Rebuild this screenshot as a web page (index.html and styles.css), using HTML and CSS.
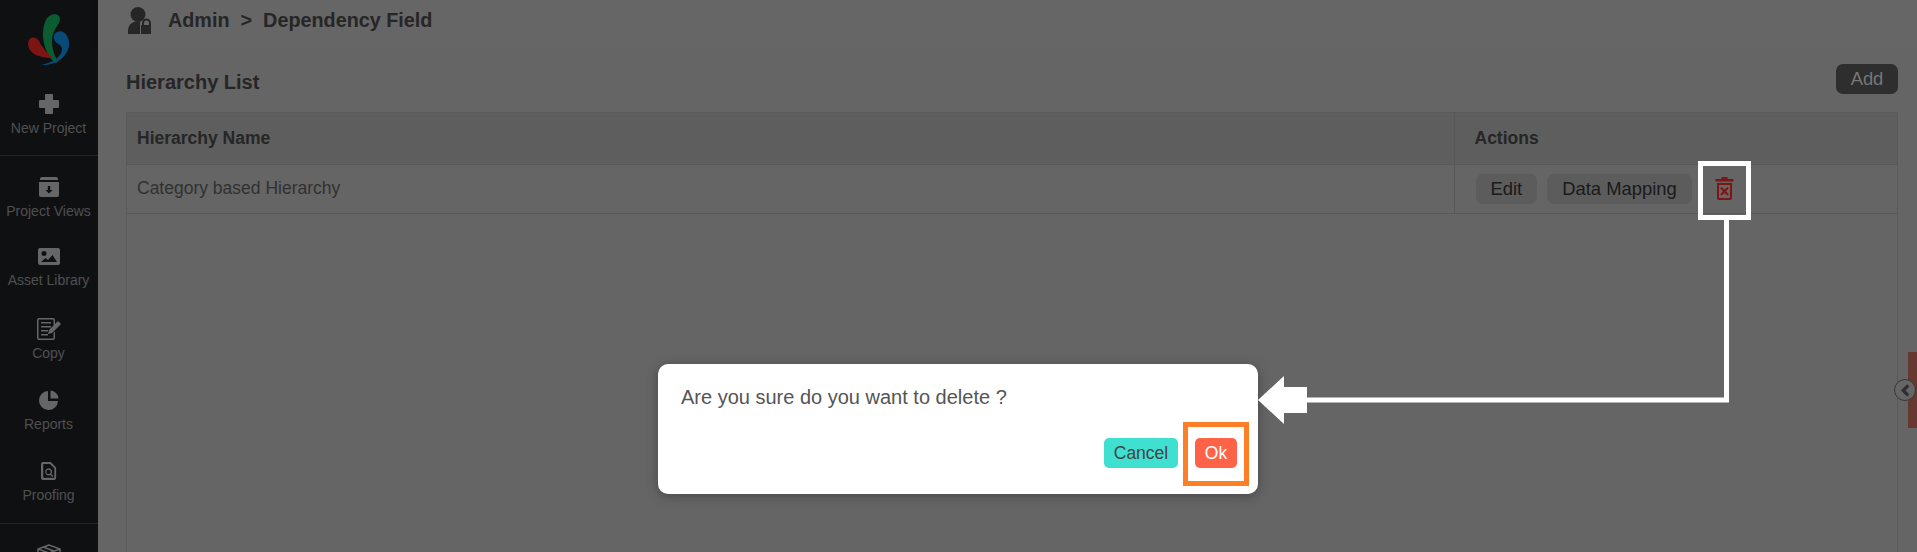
FILE: index.html
```html
<!DOCTYPE html>
<html lang="en">
  <head>
    <meta charset="UTF-8" />
    <title>Dependency Field</title>
    <link rel="stylesheet" href="styles.css">
  </head>
  <body>
    <div class="page">
      <aside class="sidebar">
        <div class="logo">
          <svg width="42" height="58" viewBox="0 0 42 58">
            <path d="M27 55 C15 44 12 24 18 12 C22 4 32 5 32 11 C32 17 24 21 24 33 C24 42 27 48 30 54 Z" fill="#0b5c30"/>
            <path d="M29 24 C36 21 42 29 41 38 C39 50 26 58 13 57 C24 55 34 49 34 41 C34 36 27 36 26 31 C25 28 27 25 29 24 Z" fill="#0a4a78"/>
            <path d="M0 35 C1 28 8 28 11 33 C15 41 21 47 25 50 C16 50 0 48 0 35 Z" fill="#7e1515"/>
          </svg>
        </div>
        <a class="nav-item nav-new">
          <span class="nav-icon"><svg width="22" height="22" viewBox="0 0 22 22"><path d="M8 1h6a1 1 0 0 1 1 1v5h5a1 1 0 0 1 1 1v6a1 1 0 0 1-1 1h-5v5a1 1 0 0 1-1 1H8a1 1 0 0 1-1-1v-5H2a1 1 0 0 1-1-1V8a1 1 0 0 1 1-1h5V2a1 1 0 0 1 1-1z"/></svg></span>
          <span>New Project</span>
        </a>
        <div class="nav-group">
          <a class="nav-item">
            <span class="nav-icon"><svg width="20" height="20" viewBox="0 0 20 20"><path d="M3 0h14a2 2 0 0 1 2 2v1H1V2a2 2 0 0 1 2-2zM0 5h20v13a2 2 0 0 1-2 2H2a2 2 0 0 1-2-2zm8.800 4v4H6.500l3.500 3.500 3.500-3.500h-2.300V9z" fill-rule="evenodd"/></svg></span>
            <span>Project Views</span>
          </a>
          <a class="nav-item">
            <span class="nav-icon"><svg width="22" height="17" viewBox="0 0 22 17"><path d="M2 0h18a2 2 0 0 1 2 2v13a2 2 0 0 1-2 2H2a2 2 0 0 1-2-2V2a2 2 0 0 1 2-2zm4 3a2.500 2.500 0 1 0 0 5 2.500 2.500 0 0 0 0-5zM3 14h16l-4.500-7-4.500 5-2.500-2z" fill-rule="evenodd"/></svg></span>
            <span>Asset Library</span>
          </a>
          <a class="nav-item">
            <span class="nav-icon"><svg width="26" height="24" viewBox="0 0 26 24"><path d="M3 1h14a2 2 0 0 1 2 2v4l-1.500 1.500V3a.5.5 0 0 0-.5-.5H3a.5.5 0 0 0-.5.500v18a.5.5 0 0 0 .5.500h14a.5.5 0 0 0 .5-.5v-5l1.500-1.500V21a2 2 0 0 1-2 2H3a2 2 0 0 1-2-2V3a2 2 0 0 1 2-2zm2 4h10v1.500H5zm0 4h10v1.500H5zm0 4h7v1.500H5zm0 4h7v1.500H5zM22 4l3 3-9 9-4 1 1-4z"/></svg></span>
            <span>Copy</span>
          </a>
          <a class="nav-item">
            <span class="nav-icon"><svg width="20" height="20" viewBox="0 0 20 20"><path d="M9 1v10h10a9.500 9.500 0 1 1-10-10zM11.500 0.500A8.500 8.500 0 0 1 19.500 8.500h-8z"/></svg></span>
            <span>Reports</span>
          </a>
          <a class="nav-item">
            <span class="nav-icon"><svg width="16" height="20" viewBox="0 0 18 20"><path d="M2 0h9l6 6v12a2 2 0 0 1-2 2H2a2 2 0 0 1-2-2V2a2 2 0 0 1 2-2zm.500 2v15.500h12.500V7l-5-5zM8.500 7a4 4 0 0 1 3.200 6.400l2.300 2.300-1.100 1.100-2.300-2.300A4 4 0 1 1 8.500 7zm0 1.500a2.500 2.500 0 1 0 0 5 2.500 2.500 0 0 0 0-5z" fill-rule="evenodd"/></svg></span>
            <span>Proofing</span>
          </a>
        </div>
        <div class="nav-group">
          <a class="nav-item">
            <span class="nav-icon"><svg width="24" height="22" viewBox="0 0 24 22"><path d="M12 1L1 5v12l11 4 11-4V5zM1 5l11 4 11-4M12 9v12M6 3l11 4" fill="none" stroke="#fff" stroke-width="1.500"/></svg></span>
          </a>
        </div>
      </aside>

      <div class="main">
        <header class="topbar">
          <svg width="23" height="27" viewBox="0 0 23 27"><circle cx="10" cy="7.500" r="7.500"/><path d="M0 27v-4a9 9 0 0 1 12-8v12z"/><path d="M14 18v-2a4.500 4.500 0 0 1 9 0v2v9h-10v-9zm2 0h5v-2a2.500 2.500 0 0 0-5 0z" fill-rule="evenodd"/></svg>
          <span class="crumb">Admin</span>
          <span class="crumb">&gt;</span>
          <span class="crumb">Dependency Field</span>
        </header>
        <section class="content">
          <div class="content-head">
            <h2>Hierarchy List</h2>
            <button class="add-btn">Add</button>
          </div>
          <div class="table-box">
            <table class="list-table">
              <thead>
                <tr>
                  <th class="col-name">Hierarchy Name</th>
                  <th>Actions</th>
                </tr>
              </thead>
              <tbody>
                <tr>
                  <td class="col-name">Category based Hierarchy</td>
                  <td>
                    <div class="row-actions">
                      <button class="row-btn">Edit</button>
                      <button class="row-btn">Data Mapping</button>
                      <svg class="trash" width="19" height="23" viewBox="0 0 18 23"><path d="M6 0h6v2h6v2.500H0V2h6zM1.500 6h15v15a2 2 0 0 1-2 2h-11a2 2 0 0 1-2-2zm2 2v13h11V8zM6 10l3 2.500L12 10l1.300 1.300-2.800 3 2.800 3L12 18.600l-3-2.600-3 2.600-1.300-1.300 2.800-3-2.800-3z" fill-rule="evenodd"/></svg>
                    </div>
                  </td>
                </tr>
              </tbody>
            </table>
          </div>
        </section>
      </div>

      <div class="side-tab"></div>
      <div class="side-toggle">
        <svg width="11" height="13" viewBox="0 0 12 14"><path d="M9 1.500L3.500 7 9 12.500" fill="none" stroke="#777" stroke-width="3.500"/></svg>
      </div>

      <div class="overlay"></div>

      <div class="confirm">
        <p>Are you sure do you want to delete ?</p>
        <div class="confirm-actions">
          <button class="btn-cancel">Cancel</button>
          <button class="btn-ok">Ok</button>
        </div>
      </div>

      <!-- callouts drawn on top of the screenshot -->
      <div class="mark mark-trash"></div>
      <div class="mark mark-ok"></div>
      <svg class="callout" width="1917" height="552" viewBox="0 0 1917 552">
        <path d="M1726.500 220V400H1300" fill="none" stroke="#fff" stroke-width="5"/>
        <path d="M1258 400L1284 376V387H1307V413H1284V424Z" fill="#fff"/>
      </svg>
    </div>
  </body>
</html>
```
FILE: styles.css
```css
html, body {
  margin: 0;
  padding: 0;
}
body {
  font-family: "Liberation Sans", Arial, sans-serif;
  background: #fff;
}
.page {
  position: relative;
  display: flex;
  width: 1917px;
  height: 552px;
  overflow: hidden;
}
.sidebar {
  width: 98px;
  flex-shrink: 0;
  box-sizing: border-box;
  padding-right: 1px;
  background: #23282f;
  display: flex;
  flex-direction: column;
  align-items: stretch;
}
.sidebar > * {
  flex-shrink: 0;
}
.logo {
  position: relative;
  z-index: 2;
  height: 92px;
  padding-top: 8px;
  box-sizing: border-box;
  display: flex;
  justify-content: center;
}
.nav-item {
  display: flex;
  flex-direction: column;
  align-items: center;
  gap: 4px;
  color: #c4c4c4;
  font-size: 14px;
  height: 71px;
}
.nav-item:first-child {
  height: 69px;
}
.nav-item:nth-child(2) {
  height: 73px;
}
.nav-item:last-child {
  height: 64px;
}
.nav-icon {
  height: 24px;
  display: flex;
  align-items: center;
  justify-content: center;
}
.nav-icon svg {
  fill: #fff;
}
.sidebar > .nav-new {
  height: 63px;
}
.nav-group {
  border-top: 1px solid #5a5a5a;
  margin-right: -1px;
  padding: 19px 1px 0 0;
}
.main {
  flex: 1;
  display: flex;
  flex-direction: column;
  min-width: 0;
}
.topbar {
  height: 47px;
  flex-shrink: 0;
  box-sizing: border-box;
  padding: 0 0 7px 30px;
  background: #fff;
  box-shadow: 0 2px 5px rgba(0, 0, 0, 0.2);
  display: flex;
  align-items: center;
  gap: 11px;
  color: #606060;
}
.topbar svg {
  fill: #606060;
  margin-right: 6px;
}
.crumb {
  font-size: 19.800px;
  font-weight: bold;
}
.content {
  flex: 1;
  display: flex;
  flex-direction: column;
  padding: 17px 19px 0 28px;
  background: #fcfcfc;
}
.content-head {
  height: 48px;
  display: flex;
  justify-content: space-between;
  align-items: flex-start;
}
.content-head h2 {
  margin: 7px 0 0;
  font-size: 20px;
  color: #606060;
}
.add-btn {
  position: relative;
  z-index: 2;
  width: 62px;
  height: 30px;
  border: none;
  border-radius: 7px;
  background: #2e2e2e;
  color: #777;
  font-family: inherit;
  font-size: 18.400px;
}
.table-box {
  flex: 1;
  border: 1px solid #e0e0e0;
  border-bottom: none;
}
.list-table {
  width: 100%;
  border-collapse: collapse;
  font-size: 17.500px;
  color: #7c7c7c;
  text-align: left;
}
.list-table th {
  height: 51px;
  box-sizing: border-box;
  background: #ebebeb;
  color: #606060;
  padding: 0 20px;
  border-bottom: 1px solid #dcdcdc;
}
.list-table td {
  height: 49px;
  box-sizing: border-box;
  padding: 0 20px;
  border-bottom: 1px solid #dcdcdc;
}
.list-table .col-name {
  width: 1327px;
  padding-left: 10px;
  box-sizing: border-box;
  border-right: 1px solid #dcdcdc;
}
.row-actions {
  display: flex;
  align-items: center;
  gap: 10px;
  margin-left: 1px;
}
.row-btn {
  height: 30px;
  padding: 0 15px;
  border: none;
  border-radius: 7px;
  background: #e6e6e6;
  color: #444;
  font-family: inherit;
  font-size: 18.400px;
}
.trash {
  position: relative;
  z-index: 2;
  fill: #7e1515;
  margin-left: 13px;
}
.side-tab {
  position: absolute;
  right: 0;
  top: 352px;
  width: 9px;
  height: 76px;
  background: #ff8f78;
}
.side-toggle {
  position: absolute;
  left: 1894px;
  top: 379px;
  width: 20px;
  height: 20px;
  border: 1px solid #888;
  border-radius: 50%;
  background: #fff;
  display: flex;
  align-items: center;
  justify-content: center;
}
.overlay {
  position: absolute;
  inset: 0;
  z-index: 1;
  background: rgba(0, 0, 0, 0.6);
}
.confirm {
  position: absolute;
  z-index: 3;
  left: 658px;
  top: 364px;
  width: 600px;
  height: 130px;
  box-sizing: border-box;
  padding: 22px 21px 0 23px;
  background: #fff;
  border-radius: 10px;
  box-shadow: 0 2px 12px rgba(0, 0, 0, 0.3);
}
.confirm p {
  margin: 0;
  font-size: 20px;
  color: #555;
}
.confirm-actions {
  display: flex;
  justify-content: flex-end;
  gap: 17px;
  margin-top: 29px;
}
.btn-cancel, .btn-ok {
  height: 30px;
  border: none;
  border-radius: 5px;
  font-family: inherit;
  font-size: 17.500px;
  padding: 0;
}
.btn-cancel {
  width: 74px;
  background: #40e0d0;
  color: #444;
}
.btn-ok {
  width: 42px;
  background: #ff6347;
  color: #fff;
}
.mark {
  position: absolute;
  z-index: 4;
  box-sizing: border-box;
  border: 5px solid #fff;
}
.mark-trash {
  left: 1698px;
  top: 161px;
  width: 53px;
  height: 59px;
}
.mark-ok {
  left: 1183px;
  top: 422px;
  width: 66px;
  height: 64px;
  border-color: #ff7f27;
}
.callout {
  position: absolute;
  z-index: 4;
  left: 0;
  top: 0;
}
```
